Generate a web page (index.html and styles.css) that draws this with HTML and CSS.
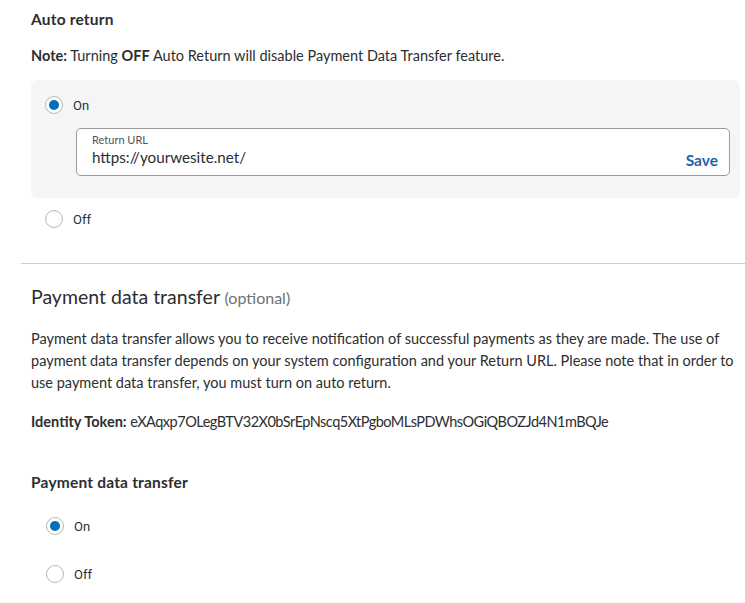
FILE: index.html
```html
<!DOCTYPE html>
<html lang="en">
<head>
<meta charset="utf-8">
<title>Website payment preferences</title>
<link rel="stylesheet" href="styles.css">
</head>
<body>
<main class="page">
  <section class="section">
    <h3 class="subhead">Auto return</h3>
    <p class="note"><b>Note:</b> Turning <b>OFF</b> Auto Return will disable Payment Data Transfer feature.</p>
    <div class="option-box">
      <label class="radio">
        <span class="dot checked"></span>
        <span class="radio-label">On</span>
      </label>
      <div class="field">
        <div class="field-text">
          <span class="field-label">Return URL</span>
          <span class="field-value">https://yourwesite.net/</span>
        </div>
        <span class="save">Save</span>
      </div>
    </div>
    <label class="radio radio-off">
      <span class="dot"></span>
      <span class="radio-label">Off</span>
    </label>
  </section>

  <hr class="divider">

  <section class="section">
    <h2 class="title">Payment data transfer <span class="optional">(optional)</span></h2>
    <p class="para">Payment data transfer allows you to receive notification of successful payments as they are made. The use of payment data transfer depends on your system configuration and your Return URL. Please note that in order to use payment data transfer, you must turn on auto return.</p>
    <p class="token"><b>Identity Token:</b> <span class="token-value">eXAqxp7OLegBTV32X0bSrEpNscq5XtPgboMLsPDWhsOGiQBOZJd4N1mBQJe</span></p>
    <h3 class="subhead subhead-2">Payment data transfer</h3>
    <div class="radio-group">
      <label class="radio">
        <span class="dot checked"></span>
        <span class="radio-label">On</span>
      </label>
      <label class="radio">
        <span class="dot"></span>
        <span class="radio-label">Off</span>
      </label>
    </div>
  </section>
</main>
</body>
</html>
```

FILE: styles.css
```css
* { box-sizing: border-box; }
html, body { margin: 0; padding: 0; background: #fff; }
body {
  font-family: Lato, "Noto Sans", sans-serif;
  color: #2c2e2f;
  font-size: 14.5px;
}
.page {
  padding: 9px 5px 0 31px;
}
.section { margin: 0; }
.subhead {
  margin: 0;
  font-size: 15.5px;
  letter-spacing: 0.2px;
  line-height: 20px;
  font-weight: 700;
}
.note {
  margin: 17px 0 0;
  font-size: 14.5px;
  line-height: 20px;
}
.note b { font-weight: 700; }
.option-box {
  margin-top: 14px;
  background: #f5f5f5;
  border-radius: 6px;
  padding: 15px 10px 22px 14px;
}
.radio {
  display: flex;
  align-items: center;
  gap: 10px;
  height: 20px;
}
.dot {
  width: 18px;
  height: 18px;
  border-radius: 50%;
  border: 1px solid #b7b7b7;
  background: #fff;
  display: flex;
  align-items: center;
  justify-content: center;
  flex: none;
}
.dot.checked::after {
  content: "";
  width: 10px;
  height: 10px;
  border-radius: 50%;
  background: #0070ba;
}
.radio-label {
  font-family: Roboto, "Liberation Sans", sans-serif;
  font-size: 13px;
  color: #2c2e2f;
}
.field {
  margin: 13px 0 0 31px;
  height: 48px;
  border: 1px solid #9a9a9a;
  border-radius: 5px;
  background: #fff;
  display: flex;
  align-items: flex-end;
  justify-content: space-between;
  padding: 0 11px 5px 15px;
}
.field-text {
  display: flex;
  flex-direction: column;
  align-self: stretch;
  padding-top: 4px;
}
.field-label {
  font-size: 11px;
  line-height: 14px;
  color: #515354;
}
.field-value {
  font-size: 15.2px;
  line-height: 20px;
  color: #2c2e2f;
}
.save {
  font-size: 15.5px;
  font-weight: 700;
  color: #1a65a6;
  line-height: 20px;
}
.radio-off {
  margin: 11px 0 0 14px;
}
.divider {
  border: 0;
  border-top: 1px solid #cfcfcf;
  margin: 34px -5px 0 -10px;
}
.title {
  margin: 21px 0 0;
  font-size: 19.5px;
  line-height: 24px;
  font-weight: 400;
}
.optional {
  font-size: 16px;
  color: #6c7378;
}
.para {
  margin: 18px 0 0;
  font-size: 14.5px;
  line-height: 22px;
}
.token {
  margin: 18px 0 0;
  font-size: 14.5px;
  line-height: 20px;
}
.token-value { letter-spacing: -0.5px; }
.subhead-2 { margin-top: 40px; }
.radio-group {
  margin: 24px 0 0 15px;
  display: flex;
  flex-direction: column;
  gap: 28px;
}
```
